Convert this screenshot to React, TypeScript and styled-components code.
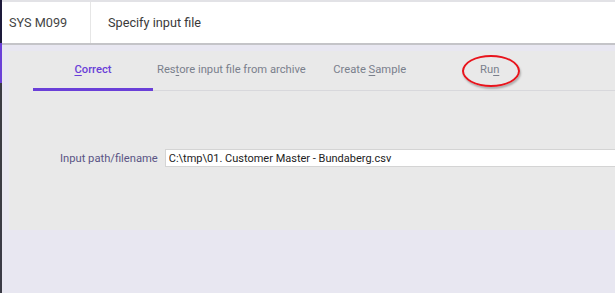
import React from "react";
import styled, {createGlobalStyle} from "styled-components";

const GlobalStyle = createGlobalStyle`
    html, body {
        margin: 0;
        padding: 0;
        width: 615px;
        height: 293px;
        overflow: hidden;
        background: #e8e7f1;
        font-family: Roboto, "Liberation Sans", Arial, sans-serif;
    }
`

type TabType = {
    id: string
    before: string
    key: string
    after: string
    marked?: boolean
}

const tabs: TabType[] = [
    {id: 'correct', before: '', key: 'C', after: 'orrect'},
    {id: 'restore', before: 'Res', key: 't', after: 'ore input file from archive'},
    {id: 'sample', before: 'Create ', key: 'S', after: 'ample'},
    {id: 'run', before: 'Ru', key: 'n', after: '', marked: true},
]

export default function App() {
    const activeTab = 'correct'

    return (
        <StyledPage>
            <GlobalStyle/>

            <StyledSideStrip>
                <StyledStripPart color={'#1d1a3a'} size={43}/>
                <StyledStripPart color={'#6a3fd8'} size={40}/>
                <StyledStripPart color={'#3b3b45'}/>
            </StyledSideStrip>

            <StyledMain>
                <StyledHeader>
                    <StyledCode>SYS M099</StyledCode>
                    <StyledTitle>Specify input file</StyledTitle>
                </StyledHeader>

                <StyledBody>
                    <StyledPanel>
                        <StyledTabBar>
                            {tabs.map(tab => (
                                <StyledTab key={tab.id} active={tab.id === activeTab}>
                                    <span>{tab.before}<u>{tab.key}</u>{tab.after}</span>
                                    {tab.marked && <StyledMark/>}
                                </StyledTab>
                            ))}
                        </StyledTabBar>

                        <StyledFieldRow>
                            <StyledLabel>Input path/filename</StyledLabel>
                            <StyledInput readOnly value={'C:\\tmp\\01. Customer Master - Bundaberg.csv'}/>
                        </StyledFieldRow>
                    </StyledPanel>
                </StyledBody>
            </StyledMain>
        </StyledPage>
    )
}

const StyledPage = styled.div`
    display: flex;
    width: 615px;
    height: 293px;
`

const StyledSideStrip = styled.div`
    display: flex;
    flex-direction: column;
    width: 2px;
    flex-shrink: 0;
`

const StyledStripPart = styled.div<{ color: string, size?: number }>`
    background: ${props => props.color};
    height: ${props => props.size ? `${props.size}px` : 'auto'};
    flex: ${props => props.size ? '0 0 auto' : '1'};
`

const StyledMain = styled.div`
    flex: 1;
    display: flex;
    flex-direction: column;
    min-width: 0;
`

const StyledHeader = styled.div`
    display: flex;
    align-items: stretch;
    height: 41px;
    background: #ffffff;
    border-top: 2px solid #e2e2e6;
    border-bottom: 2px solid #c4c4c8;
`

const StyledCode = styled.div`
    display: flex;
    align-items: center;
    width: 81px;
    padding-left: 7px;
    border-right: 1px solid #e6e6e6;
    font-size: 12.7px;
    color: #444444;
`

const StyledTitle = styled.div`
    display: flex;
    align-items: center;
    padding-left: 17px;
    font-size: 12.7px;
    color: #3a3a3a;
`

const StyledBody = styled.div`
    flex: 1;
    padding: 6px 0 0 7px;
    background: #e8e7f1;
`

const StyledPanel = styled.div`
    height: 179px;
    background: #e9e9e9;
    padding-left: 24px;
`

const StyledTabBar = styled.div`
    display: flex;
    height: 39px;
    border-bottom: 1px solid #d8d8dc;
`

const StyledTab = styled.div<{ active?: boolean }>`
    position: relative;
    display: flex;
    align-items: center;
    justify-content: center;
    min-width: 120px;
    padding: 0 4px;
    box-sizing: border-box;
    font-size: 11.2px;
    font-weight: ${props => props.active ? 500 : 400};
    color: ${props => props.active ? '#6a3fd8' : '#7a808c'};
    border-bottom: 3px solid ${props => props.active ? '#6a3fd8' : 'transparent'};
    margin-bottom: -1px;
    white-space: nowrap;

    & u {
        text-underline-offset: 2px;
    }
`

const StyledMark = styled.span`
    position: absolute;
    left: 32px;
    top: 4px;
    width: 58px;
    height: 32px;
    border: 2px solid #e8141c;
    border-radius: 50%;
    box-sizing: border-box;
    box-shadow: 1px 2px 2px rgba(0, 0, 0, 0.25);
`

const StyledFieldRow = styled.div`
    display: flex;
    align-items: center;
    gap: 7px;
    margin-top: 58px;
    padding-left: 27px;
`

const StyledLabel = styled.label`
    font-size: 11.2px;
    color: #5a5585;
    white-space: nowrap;
`

const StyledInput = styled.input`
    flex: 1;
    height: 18px;
    box-sizing: border-box;
    margin-right: -20px;
    padding: 0 3px;
    border: 1px solid #d4d4d4;
    background: #ffffff;
    font-family: Roboto, "Liberation Sans", Arial, sans-serif;
    font-size: 11px;
    color: #222222;
    outline: none;
`
